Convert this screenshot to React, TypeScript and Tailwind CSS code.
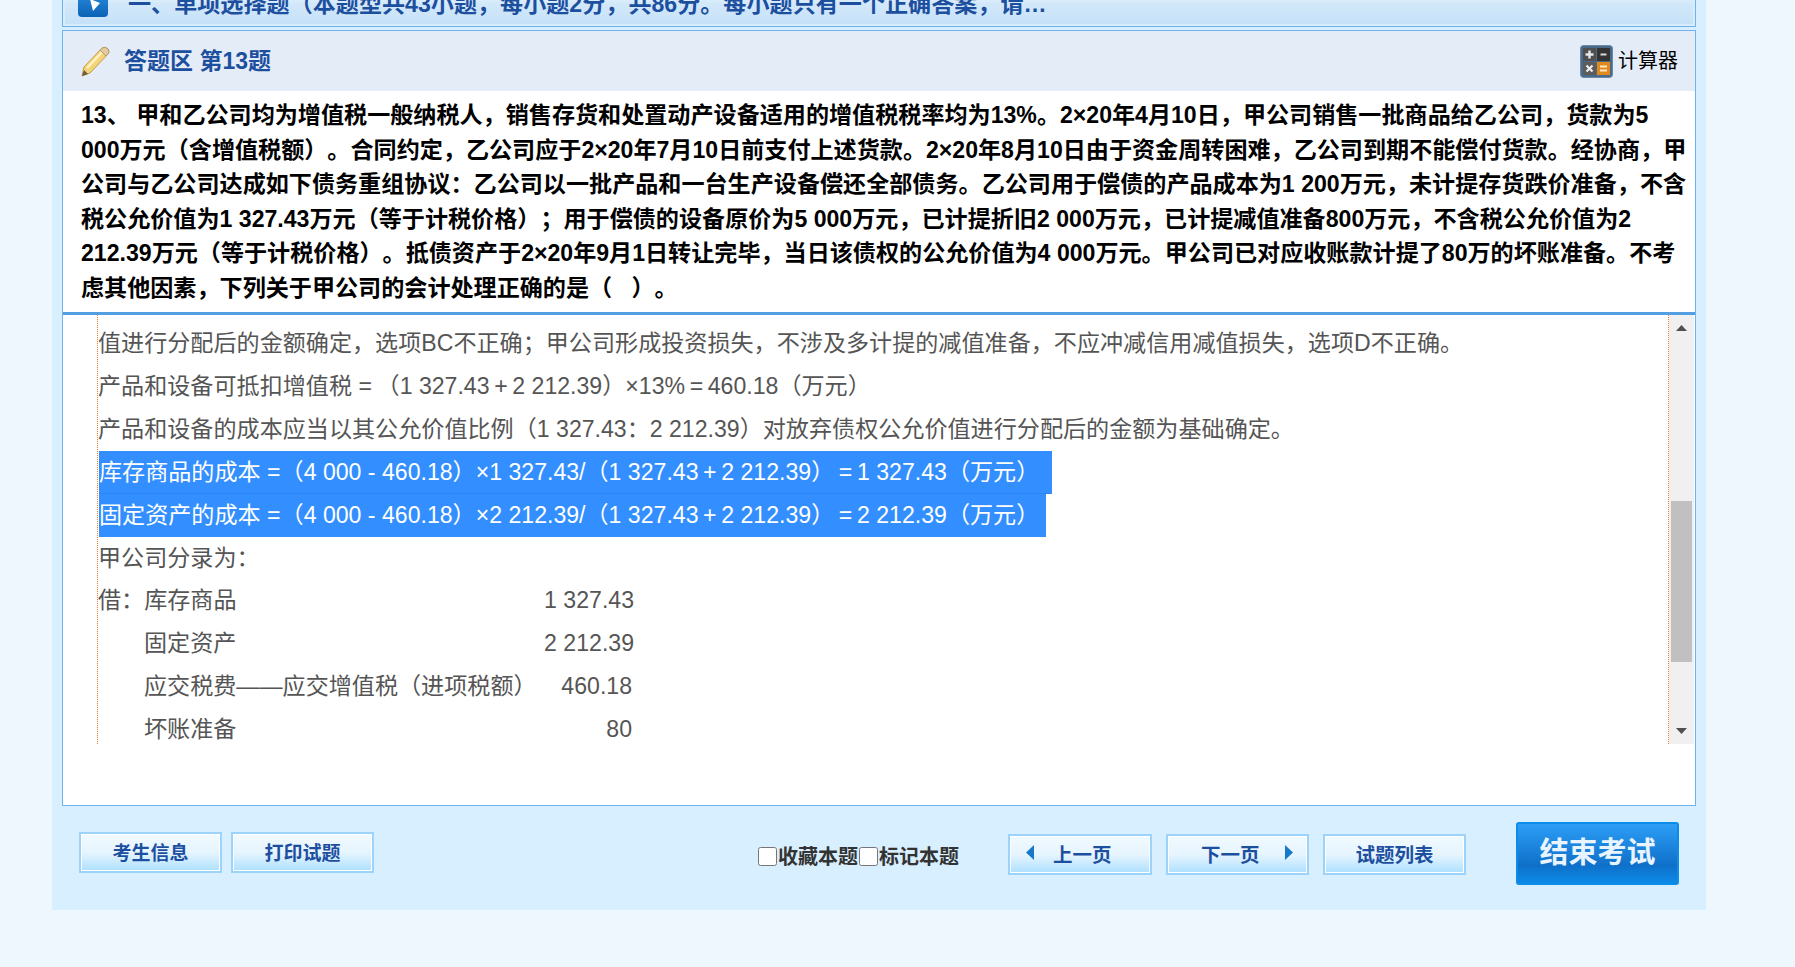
import React from 'react';

const font = 'font-["Liberation_Sans","Noto_Sans_CJK_SC",sans-serif]';

const questionLines = [
    '13、 甲和乙公司均为增值税一般纳税人，销售存货和处置动产设备适用的增值税税率均为13%。2×20年4月10日，甲公司销售一批商品给乙公司，货款为5',
    '000万元（含增值税额）。合同约定，乙公司应于2×20年7月10日前支付上述货款。2×20年8月10日由于资金周转困难，乙公司到期不能偿付货款。经协商，甲',
    '公司与乙公司达成如下债务重组协议：乙公司以一批产品和一台生产设备偿还全部债务。乙公司用于偿债的产品成本为1 200万元，未计提存货跌价准备，不含',
    '税公允价值为1 327.43万元（等于计税价格）；用于偿债的设备原价为5 000万元，已计提折旧2 000万元，已计提减值准备800万元，不含税公允价值为2',
    '212.39万元（等于计税价格）。抵债资产于2×20年9月1日转让完毕，当日该债权的公允价值为4 000万元。甲公司已对应收账款计提了80万的坏账准备。不考',
    '虑其他因素，下列关于甲公司的会计处理正确的是（   ）。',
];

const entries = [
    { label: '借：库存商品', amount: '1 327.43', indent: false, pad: false },
    { label: '固定资产', amount: '2 212.39', indent: true, pad: false },
    { label: '应交税费——应交增值税（进项税额）', amount: '460.18', indent: true, pad: true },
    { label: '坏账准备', amount: '80', indent: true, pad: true },
];

const NavButton: React.FC<{ className?: string; children: React.ReactNode }> = ({ className = '', children }) => (
    <button className={`h-[41px] pt-[3px] border-2 border-[#9bd3fb] bg-gradient-to-b from-[#f0f9ff] via-[#e6f5ff] to-[#ade0ff] shadow-[inset_0_0_0_1px_#ffffff] text-[19px] font-bold text-[#1d4f9f] flex items-center justify-center ${className}`}>
        {children}
    </button>
);

const PencilIcon = () => (
    <svg width="32" height="32" viewBox="0 0 32 32" className="shrink-0">
        <path d="M4 22 L22 3 Q25 1 28 4 Q30 7 28 9 L10 28 L2 31 Z" fill="#f3d47a" stroke="#c99a3a" strokeWidth="1" />
        <path d="M7 23 L24 5" stroke="#fff3c4" strokeWidth="2.5" />
        <path d="M22 3 Q25 1 28 4 Q30 7 28 9 L26 11 L20 5 Z" fill="#e2c9a0" stroke="#b79a6a" strokeWidth="1" />
        <path d="M4 25 L2 31 L8 29 Z" fill="#6b5a45" />
    </svg>
);

const CalculatorIcon = () => (
    <svg width="33" height="33" viewBox="0 0 33 33" className="shrink-0">
        <rect x="0.5" y="0.5" width="32" height="32" rx="3" fill="#4a6a8a" stroke="#6a88a6" />
        <rect x="3" y="3" width="13" height="13" fill="#4f4f4f" />
        <rect x="17" y="3" width="13" height="13" fill="#333333" />
        <rect x="3" y="17" width="13" height="13" fill="#5c5c5c" />
        <rect x="17" y="17" width="13" height="13" fill="#e08a1e" />
        <path d="M9.5 5.5v8M5.5 9.5h8" stroke="#e8e8e8" strokeWidth="2.4" />
        <path d="M20.5 9.5h6" stroke="#d8d8d8" strokeWidth="2" />
        <path d="M6.5 20.5l6 6M12.5 20.5l-6 6" stroke="#eeeeee" strokeWidth="2.2" />
        <path d="M20 21.5h7M20 25.5h7" stroke="#fbe7c5" strokeWidth="2" />
    </svg>
);

const ScrollArrow: React.FC<{ down?: boolean }> = ({ down }) => (
    <svg width="11" height="6" viewBox="0 0 11 6" className="shrink-0">
        <path d={down ? 'M0 0H11L5.5 6Z' : 'M5.5 0L11 6H0Z'} fill="#505050" />
    </svg>
);

const PageArrow: React.FC<{ right?: boolean }> = ({ right }) => (
    <svg width="10" height="15" viewBox="0 0 10 15" className="shrink-0 -mt-[7px]">
        <path d={right ? 'M1 0L9 7.5L1 15Z' : 'M9 0L1 7.5L9 15Z'} fill="#1678c9" />
    </svg>
);

const THIN = '\u2009';

export default function App() {
    return (
        <div className={`h-[967px] overflow-hidden bg-[#eef6fe] [text-spacing-trim:space-all] ${font}`}>
            <div className="ml-[52px] w-[1654px] h-[910px] bg-[#d8efff] px-[10px]">
                <div className="h-[27px] overflow-hidden border-x border-b border-[#6fb3ea] bg-gradient-to-b from-[#d5e9fa] to-[#c4e1f8] shadow-[inset_0_0_0_2px_#d9ecfb]">
                    <div className="flex items-center gap-[20px] pl-[15px] -mt-[12px] h-[32px] whitespace-nowrap">
                        <div className="relative w-[30px] h-[26px] rounded-[4px] bg-gradient-to-b from-[#2a8ee0] to-[#0b62b5] shrink-0">
                            <svg width="12" height="12" viewBox="0 0 12 12" className="absolute left-[10px] top-[8px]">
                                <path d="M2 0L12 4L5 12Z" fill="#ffffff" />
                            </svg>
                        </div>
                        <span className="text-[23.1px] font-bold text-[#1d4f9f]">一、单项选择题（本题型共43小题，每小题2分，共86分。每小题只有一个正确答案，请…</span>
                    </div>
                </div>
                <div className="mt-[3px] h-[776px] border border-[#6fb3ea] bg-white">
                    <div className="flex items-center justify-between h-[60px] bg-[#e4ecf7] pl-[17px] pr-[17px]">
                        <div className="flex items-center gap-[12px]">
                            <PencilIcon />
                            <span className="text-[23px] font-bold text-[#1d4f9f]">答题区 第13题</span>
                        </div>
                        <div className="flex items-center gap-[5px]">
                            <CalculatorIcon />
                            <span className="text-[20px] text-black">计算器</span>
                        </div>
                    </div>
                    <div className="h-[221px] pt-[7px] pl-[18px] text-[23.1px] leading-[34.6px] font-bold text-black whitespace-pre">
                        {questionLines.map((line) => (
                            <div key={line}>{line}</div>
                        ))}
                    </div>
                    <div className="h-[3px] w-[1632px] bg-[#539fe3]" />
                    <div className="h-[429px] flex">
                        <div className="w-[34px] shrink-0" />
                        <div className="w-[1572px] overflow-hidden border-x border-dotted border-[#e8772e] pt-[7px] text-[23.1px] leading-[42.9px] text-[#555555] whitespace-pre">
                            <div>值进行分配后的金额确定，选项BC不正确；甲公司形成投资损失，不涉及多计提的减值准备，不应冲减信用减值损失，选项D不正确。</div>
                            <div>产品和设备可抵扣增值税 ={THIN}（1 327.43{THIN}+{THIN}2 212.39）×13%{THIN}={THIN}460.18（万元）</div>
                            <div>产品和设备的成本应当以其公允价值比例（1 327.43：2 212.39）对放弃债权公允价值进行分配后的金额为基础确定。</div>
                            <div><span className="inline-block ml-[1px] bg-[#338fff] pr-[13px] text-white shadow-[inset_0_-1px_0_#2a86f8]">库存商品的成本 =（4 000 - 460.18）×1 327.43/（1 327.43{THIN}+{THIN}2 212.39）{THIN}={THIN}1 327.43（万元）</span></div>
                            <div><span className="inline-block ml-[1px] bg-[#338fff] pr-[7px] text-white">固定资产的成本 =（4 000 - 460.18）×2 212.39/（1 327.43{THIN}+{THIN}2 212.39）{THIN}={THIN}2 212.39（万元）</span></div>
                            <div>甲公司分录为：</div>
                            {entries.map((entry) => (
                                <div key={entry.label} className="flex w-[536px] justify-between">
                                    <span className={entry.indent ? 'pl-[46px]' : ''}>{entry.label}</span>
                                    <span className={entry.pad ? 'pr-[2px]' : ''}>{entry.amount}</span>
                                </div>
                            ))}
                        </div>
                        <div className="w-[25px] shrink-0 bg-[#f0f0f0] flex flex-col items-center pt-[10px] pr-[1px]">
                            <ScrollArrow />
                            <div className="w-[21px] h-[161px] mt-[170px] bg-[#c0c0c0]" />
                            <div className="mt-[66px]">
                                <ScrollArrow down />
                            </div>
                        </div>
                    </div>
                </div>
                <div className="relative flex">
                    <div className="flex gap-[9px] pl-[17px] pt-[26px]">
                        <NavButton className="w-[143px]">考生信息</NavButton>
                        <NavButton className="w-[143px]">打印试题</NavButton>
                    </div>
                    <div className="ml-[384px] flex items-center h-[41px] mt-[30px] text-[20px] font-bold text-[#333333] w-[250px]">
                        <input type="checkbox" className="w-[19px] h-[19px] mr-[1px]" />
                        <span>收藏本题</span>
                        <input type="checkbox" className="w-[19px] h-[19px] ml-[1px] mr-[1px]" />
                        <span>标记本题</span>
                    </div>
                    <div className="flex gap-[14px] pt-[28px]">
                        <NavButton className="w-[144px] !justify-start gap-[18px] pl-[15px] !text-[19.5px]"><PageArrow />上一页</NavButton>
                        <NavButton className="w-[143px] !justify-start gap-[24px] pl-[33px] !text-[19.5px]">下一页<PageArrow right /></NavButton>
                        <NavButton className="w-[143px] !text-[19.5px]">试题列表</NavButton>
                    </div>
                    <button className="ml-[50px] mt-[16px] w-[163px] h-[63px] rounded-[3px] border-2 border-[#0a8ce8] bg-gradient-to-b from-[#2c9ef6] via-[#0f70c9] via-70% to-[#0b8ae6] text-[29px] font-bold text-[#e8f4ff]">
                        结束考试
                    </button>
                </div>
            </div>
        </div>
    );
}
